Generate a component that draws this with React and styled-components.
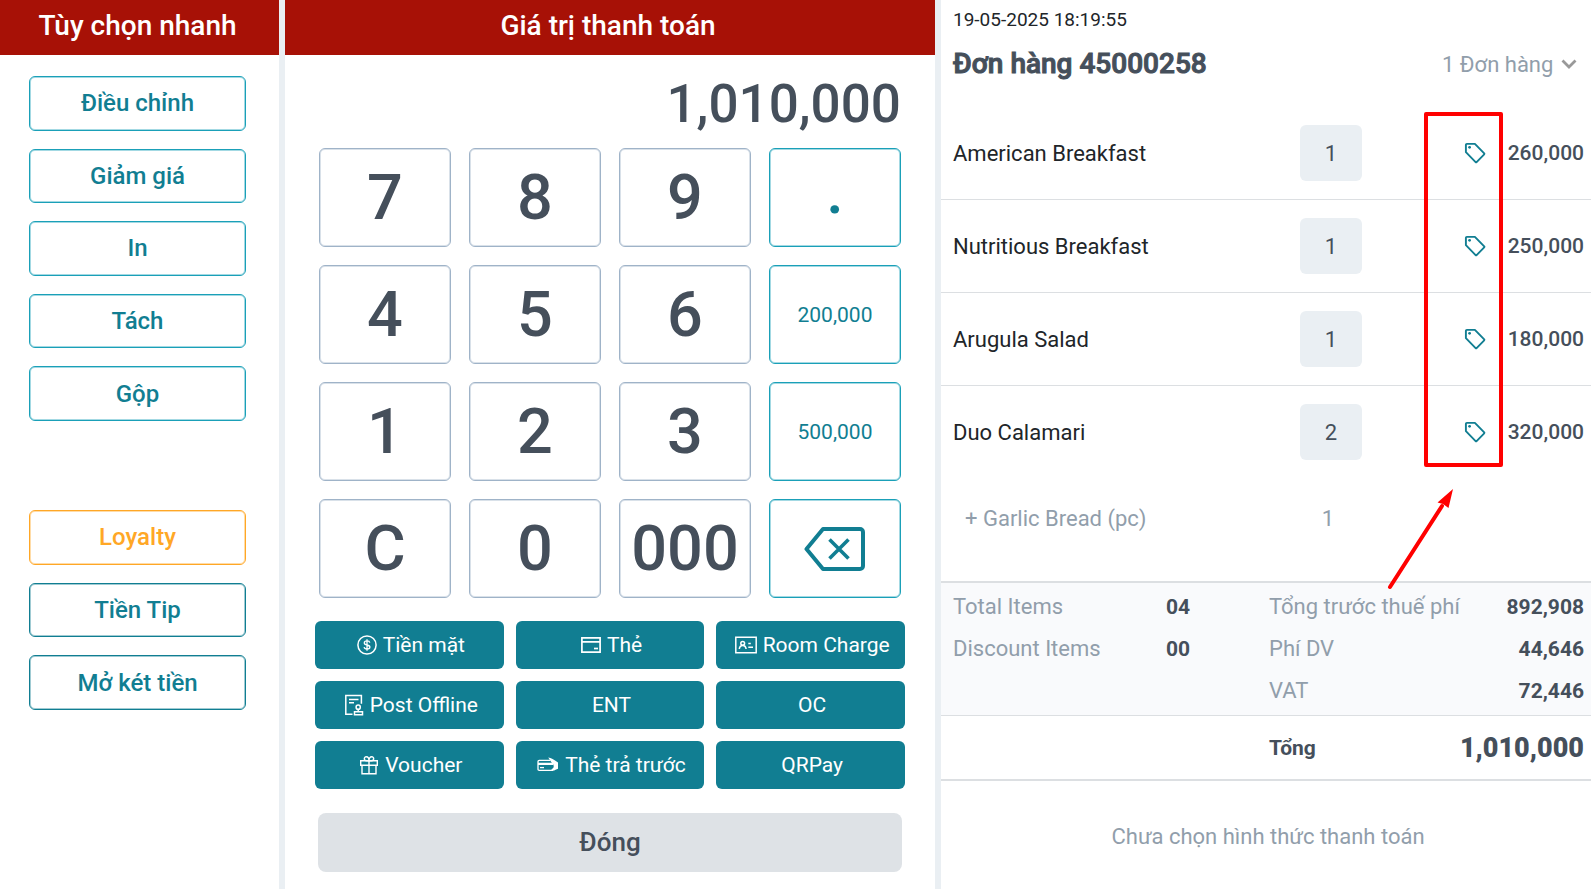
import React from 'react';
import styled, { createGlobalStyle } from 'styled-components';

const color = {
  red: '#a71106',
  teal: '#117e92',
  cyan: '#1aa0b8',
  orange: '#ffa726',
  ink: '#454f5b',
  text: '#212529',
  muted: '#919eab',
  gutter: '#eaeff3',
  line: '#dcdfe2',
  mark: '#ff0000',
};

const GlobalStyle = createGlobalStyle`
  *, *::before, *::after { box-sizing: border-box; }
  body { margin: 0; background: #fff; }
  body, button, select { font-family: Roboto, "Noto Sans", "Liberation Sans", sans-serif; }
  button { cursor: pointer; padding: 0; }
  h1, h2, p, dl, dd, dt { margin: 0; }
`;

const Screen = styled.main`
  display: grid;
  grid-template-columns: 279fr 650fr 650fr;
  gap: 6px;
  min-height: 100vh;
  background: ${color.gutter};
`;

const Panel = styled.section`
  display: flex;
  flex-direction: column;
  min-width: 0;
  background: #fff;
`;

const PanelTitle = styled.h1`
  padding: 0 4px 4px 0;
  height: 55px;
  display: flex;
  align-items: center;
  justify-content: center;
  background: ${color.red};
  color: #fff;
  font-size: 28px;
  font-weight: 500;
  white-space: nowrap;
`;

const OptionGroup = styled.div`
  display: grid;
  grid-auto-rows: 1fr;
  gap: 18px;
  min-height: ${(p) => p.$height}px;
  margin: ${(p) => p.$top}px 33px 0 29px;
`;

const OptionButton = styled.button`
  border: 1px solid ${(p) => p.$border};
  border-radius: 6px;
  box-shadow: inset 0 0 0 1px ${(p) => p.$border}66;
  background: #fff;
  color: ${(p) => p.$color};
  font-size: 24px;
  font-weight: 500;
`;

const Amount = styled.output`
  height: 93px;
  padding: 4px 34px 0;
  display: flex;
  align-items: center;
  justify-content: flex-end;
  color: ${color.ink};
  font-size: 53px;
  font-weight: 500;
`;

const Keypad = styled.div`
  display: grid;
  grid-template-columns: repeat(4, 1fr);
  grid-auto-rows: 99px;
  gap: 18px;
  padding: 0 34px;
`;

const Key = styled.button`
  display: flex;
  align-items: center;
  justify-content: center;
  padding-bottom: ${(p) => (p.$raised ? 12 : 0)}px;
  border: 1px solid ${(p) => (p.$accent ? color.cyan : '#9fb3c8')};
  border-radius: 6px;
  box-shadow: inset 0 0 0 1px ${(p) => (p.$accent ? color.cyan : '#9fb3c8')}66;
  background: #fff;
  color: ${(p) => (p.$accent ? color.teal : color.ink)};
  font-size: ${(p) => (p.$small ? 21 : 63)}px;
  font-weight: ${(p) => (p.$small ? 400 : 500)};
`;

const PayGrid = styled.div`
  display: grid;
  grid-template-columns: repeat(3, 1fr);
  grid-auto-rows: 48px;
  gap: 12px;
  margin: 23px 30px 24px;
`;

const PayButton = styled.button`
  display: flex;
  align-items: center;
  justify-content: center;
  gap: 6px;
  padding-left: 3px;
  border: 0;
  border-radius: 6px;
  background: ${color.teal};
  color: #fff;
  font-size: 21px;
  white-space: nowrap;
`;

const CloseButton = styled.button`
  height: 59px;
  margin: 0 33px 17px;
  padding-bottom: 2px;
  border: 0;
  border-radius: 8px;
  background: #dee2e6;
  color: ${color.ink};
  font-size: 26px;
  font-weight: 500;
`;

const OrderHead = styled.header`
  display: flex;
  flex-direction: column;
  height: 107px;
  padding: 8px 12px 0;
`;

const Stamp = styled.time`
  color: ${color.text};
  font-size: 19px;
  line-height: 24px;
`;

const TitleRow = styled.div`
  display: flex;
  align-items: center;
  justify-content: space-between;
  margin-top: 12px;
`;

const OrderTitle = styled.h2`
  color: ${color.ink};
  font-size: 28px;
  line-height: 40px;
  font-weight: 500;
  -webkit-text-stroke: 1px ${color.ink};
`;

const OrderPicker = styled.label`
  display: flex;
  align-items: center;
  gap: 7px;
  margin-right: 2px;
`;

const OrderSelect = styled.select`
  appearance: none;
  border: 0;
  padding: 0;
  background: none;
  color: ${color.muted};
  font-size: 22px;
`;

const ItemArea = styled.div`
  position: relative;
  padding-bottom: 23px;
`;

const ItemTable = styled.table`
  width: 100%;
  table-layout: fixed;
  border-collapse: separate;
  border-spacing: 0;
  font-size: 22px;

  td { padding: 0; }
`;

const ColQty = styled.col` width: 62px; `;
const ColTag = styled.col` width: 126px; `;
const ColPrice = styled.col` width: 103px; `;

const ItemRow = styled.tr`
  height: 93px;
  color: ${color.text};

  td { border-bottom: 1px solid ${(p) => (p.$last ? 'transparent' : color.line)}; }
`;

const ExtraRow = styled.tr`
  height: 79px;
  color: ${color.muted};
`;

const NameCell = styled.td`
  && { padding-left: ${(p) => (p.$nested ? 24 : 12)}px; }
`;

const QtyCell = styled.td`
  text-align: center;
  && { padding-right: ${(p) => (p.$nested ? 6 : 0)}px; }
`;

const QtyButton = styled.button`
  display: block;
  width: 100%;
  height: 56px;
  border: 0;
  border-radius: 6px;
  background: #eaeff3;
  color: ${color.ink};
  font-size: 22px;
`;

const TagCell = styled.td`
  && { padding-right: 2px; }
`;

const TagButton = styled.button`
  display: flex;
  margin-left: auto;
  border: 0;
  background: none;
`;

const PriceCell = styled.td`
  && { padding-right: 7px; }
  text-align: right;
  color: ${color.ink};
  font-size: 21px;
  font-weight: 500;
`;

const TagHighlight = styled.div`
  position: absolute;
  top: 5px;
  right: 88px;
  width: 79px;
  height: 355px;
  border: 4px solid ${color.mark};
  border-radius: 2px;
  pointer-events: none;
`;

const Pointer = styled.svg`
  position: absolute;
  top: 381px;
  right: 136px;
  pointer-events: none;
`;

const Summary = styled.div`
  display: grid;
  grid-template-columns: 316fr 334fr;
  height: 135px;
  padding-top: 3px;
  border-top: 2px solid ${color.line};
  border-bottom: 1px solid ${color.line};
  background: #f9fafc;
`;

const Facts = styled.dl`
  display: flex;
  flex-direction: column;
  padding: 0 ${(p) => p.$right}px 0 12px;
`;

const Fact = styled.div`
  display: flex;
  justify-content: space-between;
  font-size: 22px;
  line-height: 42px;
  white-space: nowrap;

  dt { color: ${color.muted}; }
  dd { color: ${color.ink}; font-weight: 700; font-size: 21px; }
`;

const TotalRow = styled.div`
  display: grid;
  grid-template-columns: 328fr 322fr;
  height: 65px;
  border-bottom: 2px solid ${color.line};
`;

const Total = styled.p`
  grid-column: 2;
  display: flex;
  align-items: center;
  justify-content: space-between;
  padding-right: 7px;
  color: ${color.ink};
  font-size: 21px;
  font-weight: 700;

  strong { font-size: 27px; }
`;

const EmptyNote = styled.p`
  padding: 40px 0 40px 4px;
  text-align: center;
  color: ${color.muted};
  font-size: 22px;
  line-height: 32px;
`;

const Icon = ({ w = 20, h = 20, children, stroke = 1.5 }) => (
  <svg width={w} height={h} viewBox={`0 0 ${w} ${h}`} fill="none" stroke="currentColor" strokeWidth={stroke} aria-hidden="true">
    {children}
  </svg>
);

const CashIcon = () => (
  <Icon>
    <circle cx="10" cy="10" r="9.1" />
    <path d="M12.8 7.6C12.6 6.5 11.5 5.9 10 5.9c-1.6 0-2.7.8-2.7 2 0 2.9 5.6 1.3 5.6 4.2 0 1.2-1.2 2-2.9 2-1.6 0-2.7-.7-2.9-1.9M10 4.3v11.4" strokeWidth="1.3" />
  </Icon>
);

const CardIcon = () => (
  <Icon h={18} stroke={1.7}>
    <path d="M.9 1.8h18.2v14.4H.9zM.9 5.9h18.2" />
    <path d="M13 12.5h4" />
  </Icon>
);

const RoomIcon = () => (
  <Icon w={22} h={18} stroke={1.5}>
    <path d="M.8 1.3h20.4v15.4H.8z" />
    <circle cx="7.7" cy="7.3" r="1.900" />
    <path d="M4.3 13c.2-2.2 1.500-3.600 3.400-3.600s3.200 1.400 3.400 3.600M13.300 7.500h2.500M13.300 11.200h4.700" />
  </Icon>
);

const OfflineIcon = () => (
  <Icon w={20} h={22} stroke={1.5}>
    <path d="M8.5 20.2H1.8V1.5h15.6v8.3M5 5.5h9.5M5 8.800h5" />
    <circle cx="14.2" cy="13.2" r="2.1" />
    <path d="M14.2 15.300v2M10.500 20.700v-3h8v3z" />
  </Icon>
);

const GiftIcon = () => (
  <Icon h={20} stroke={1.4}>
    <path d="M1.7 5.8h16.6v4.400H1.700zM3 10.200h14v8.600H3zM10 5.800v13" />
    <path d="M10 5.8H7.500C4.600 5.800 4.700 1.700 7.300 1.700 9 1.700 10 3.400 10 5.800zM10 5.800h2.500c2.900 0 2.800-4.100.2-4.100C11 1.700 10 3.400 10 5.800z" />
  </Icon>
);

const PrepaidIcon = () => (
  <Icon w={22} h={18} stroke={1.3}>
    <path d="M16 14.300H2.200c-.7 0-1.200-.4-1.200-1.100V5.400c0-.7.500-1.100 1.200-1.100h11" />
    <path d="M1 7.300h15M1 8.400h15" />
    <path d="M3 11.600h4" />
    <path d="M11.200 1.500c3 .3 5.500 1.800 9.800 5v6.300c-1.600.3-3 1.900-5.300 1.900-1.500 0-1.700-1.500-.4-2 .8-.3 1.400-1 1.400-2.400 0-1.600-.8-2.500-2-3.500z" fill="currentColor" stroke="none" />
  </Icon>
);

const BackspaceIcon = () => (
  <Icon w={62} h={46} stroke={4}>
    <path d="M2.500 23 19 3h37c1.700 0 3 1.300 3 3v34c0 1.700-1.300 3-3 3H19z" strokeLinejoin="round" />
    <path d="M25.500 13.500 44.500 32.500M44.500 13.500 25.500 32.500" strokeWidth="3.6" />
  </Icon>
);

const TagIcon = () => (
  <svg width="22" height="22" viewBox="0 0 22 22" fill="none" stroke={color.teal} strokeWidth="1.9" strokeLinejoin="round" aria-hidden="true">
    <path d="M1.900 2.900c0-.6.400-1 1-1h8L20.200 11.400c.3.300.3.600 0 .9l-7.600 7.800c-.3.300-.7.300-1 0L1.900 10.200z" />
    <circle cx="5.600" cy="5.300" r="1.400" fill={color.teal} stroke="none" />
  </svg>
);

const ChevronIcon = () => (
  <svg width="16" height="12" viewBox="0 0 16 12" fill="none" stroke="#999" strokeWidth="2.8" aria-hidden="true">
    <path d="M1.500 2.500 8 9l6.500-6.500" />
  </svg>
);

const editOptions = ['Điều chỉnh', 'Giảm giá', 'In', 'Tách', 'Gộp'];

const extraOptions = [
  { label: 'Loyalty', tone: color.orange },
  { label: 'Tiền Tip', tone: color.teal },
  { label: 'Mở két tiền', tone: color.teal },
];

const keys = [
  { label: '7' }, { label: '8' }, { label: '9' }, { label: '.', accent: true, raised: true },
  { label: '4' }, { label: '5' }, { label: '6' }, { label: '200,000', accent: true, small: true },
  { label: '1' }, { label: '2' }, { label: '3' }, { label: '500,000', accent: true, small: true },
  { label: 'C' }, { label: '0' }, { label: '000' },
];

const payments = [
  { label: 'Tiền mặt', Glyph: CashIcon },
  { label: 'Thẻ', Glyph: CardIcon },
  { label: 'Room Charge', Glyph: RoomIcon },
  { label: 'Post Offline', Glyph: OfflineIcon },
  { label: 'ENT' },
  { label: 'OC' },
  { label: 'Voucher', Glyph: GiftIcon },
  { label: 'Thẻ trả trước', Glyph: PrepaidIcon },
  { label: 'QRPay' },
];

const items = [
  { name: 'American Breakfast', qty: 1, price: '260,000' },
  { name: 'Nutritious Breakfast', qty: 1, price: '250,000' },
  { name: 'Arugula Salad', qty: 1, price: '180,000' },
  { name: 'Duo Calamari', qty: 2, price: '320,000' },
];

export default function App() {
  return (
    <>
      <GlobalStyle />
      <Screen>
        <Panel>
          <PanelTitle>Tùy chọn nhanh</PanelTitle>
          <OptionGroup $height={345} $top={21}>
            {editOptions.map((label) => (
              <OptionButton key={label} type="button" $border={color.cyan} $color={color.teal}>{label}</OptionButton>
            ))}
          </OptionGroup>
          <OptionGroup $height={200} $top={89}>
            {extraOptions.map(({ label, tone }) => (
              <OptionButton key={label} type="button" $border={tone} $color={tone}>{label}</OptionButton>
            ))}
          </OptionGroup>
        </Panel>

        <Panel>
          <PanelTitle>Giá trị thanh toán</PanelTitle>
          <Amount>1,010,000</Amount>
          <Keypad>
            {keys.map((k) => (
              <Key key={k.label} type="button" $accent={k.accent} $small={k.small} $raised={k.raised}>{k.label}</Key>
            ))}
            <Key type="button" $accent aria-label="Xóa"><BackspaceIcon /></Key>
          </Keypad>
          <PayGrid>
            {payments.map(({ label, Glyph }) => (
              <PayButton key={label} type="button">
                {Glyph && <Glyph />}
                {label}
              </PayButton>
            ))}
          </PayGrid>
          <CloseButton type="button">Đóng</CloseButton>
        </Panel>

        <Panel>
          <OrderHead>
            <Stamp dateTime="2025-05-19T18:19:55">19-05-2025 18:19:55</Stamp>
            <TitleRow>
              <OrderTitle>Đơn hàng 45000258</OrderTitle>
              <OrderPicker>
                <OrderSelect aria-label="Đơn hàng" defaultValue="1">
                  <option value="1">1 Đơn hàng</option>
                </OrderSelect>
                <ChevronIcon />
              </OrderPicker>
            </TitleRow>
          </OrderHead>

          <ItemArea>
            <ItemTable>
              <colgroup>
                <col />
                <ColQty />
                <ColTag />
                <ColPrice />
              </colgroup>
              <tbody>
                {items.map((item, i) => (
                  <ItemRow key={item.name} $last={i === items.length - 1}>
                    <NameCell>{item.name}</NameCell>
                    <QtyCell><QtyButton type="button">{item.qty}</QtyButton></QtyCell>
                    <TagCell><TagButton type="button" aria-label="Giảm giá"><TagIcon /></TagButton></TagCell>
                    <PriceCell>{item.price}</PriceCell>
                  </ItemRow>
                ))}
                <ExtraRow>
                  <NameCell $nested>+ Garlic Bread (pc)</NameCell>
                  <QtyCell $nested>1</QtyCell>
                  <td />
                  <td />
                </ExtraRow>
              </tbody>
            </ItemTable>
            <TagHighlight />
            <Pointer width="70" height="104" viewBox="0 0 70 104" aria-hidden="true">
              <path d="M5 99 57 18" stroke={color.mark} strokeWidth="4" strokeLinecap="round" />
              <path d="M68 1 63.500 20 58 16 52.500 14.500z" fill={color.mark} />
            </Pointer>
          </ItemArea>

          <Summary>
            <Facts $right={67}>
              <Fact><dt>Total Items</dt><dd>04</dd></Fact>
              <Fact><dt>Discount Items</dt><dd>00</dd></Fact>
            </Facts>
            <Facts $right={7}>
              <Fact><dt>Tổng trước thuế phí</dt><dd>892,908</dd></Fact>
              <Fact><dt>Phí DV</dt><dd>44,646</dd></Fact>
              <Fact><dt>VAT</dt><dd>72,446</dd></Fact>
            </Facts>
          </Summary>
          <TotalRow>
            <Total><span>Tổng</span><strong>1,010,000</strong></Total>
          </TotalRow>
          <EmptyNote>Chưa chọn hình thức thanh toán</EmptyNote>
        </Panel>
      </Screen>
    </>
  );
}
